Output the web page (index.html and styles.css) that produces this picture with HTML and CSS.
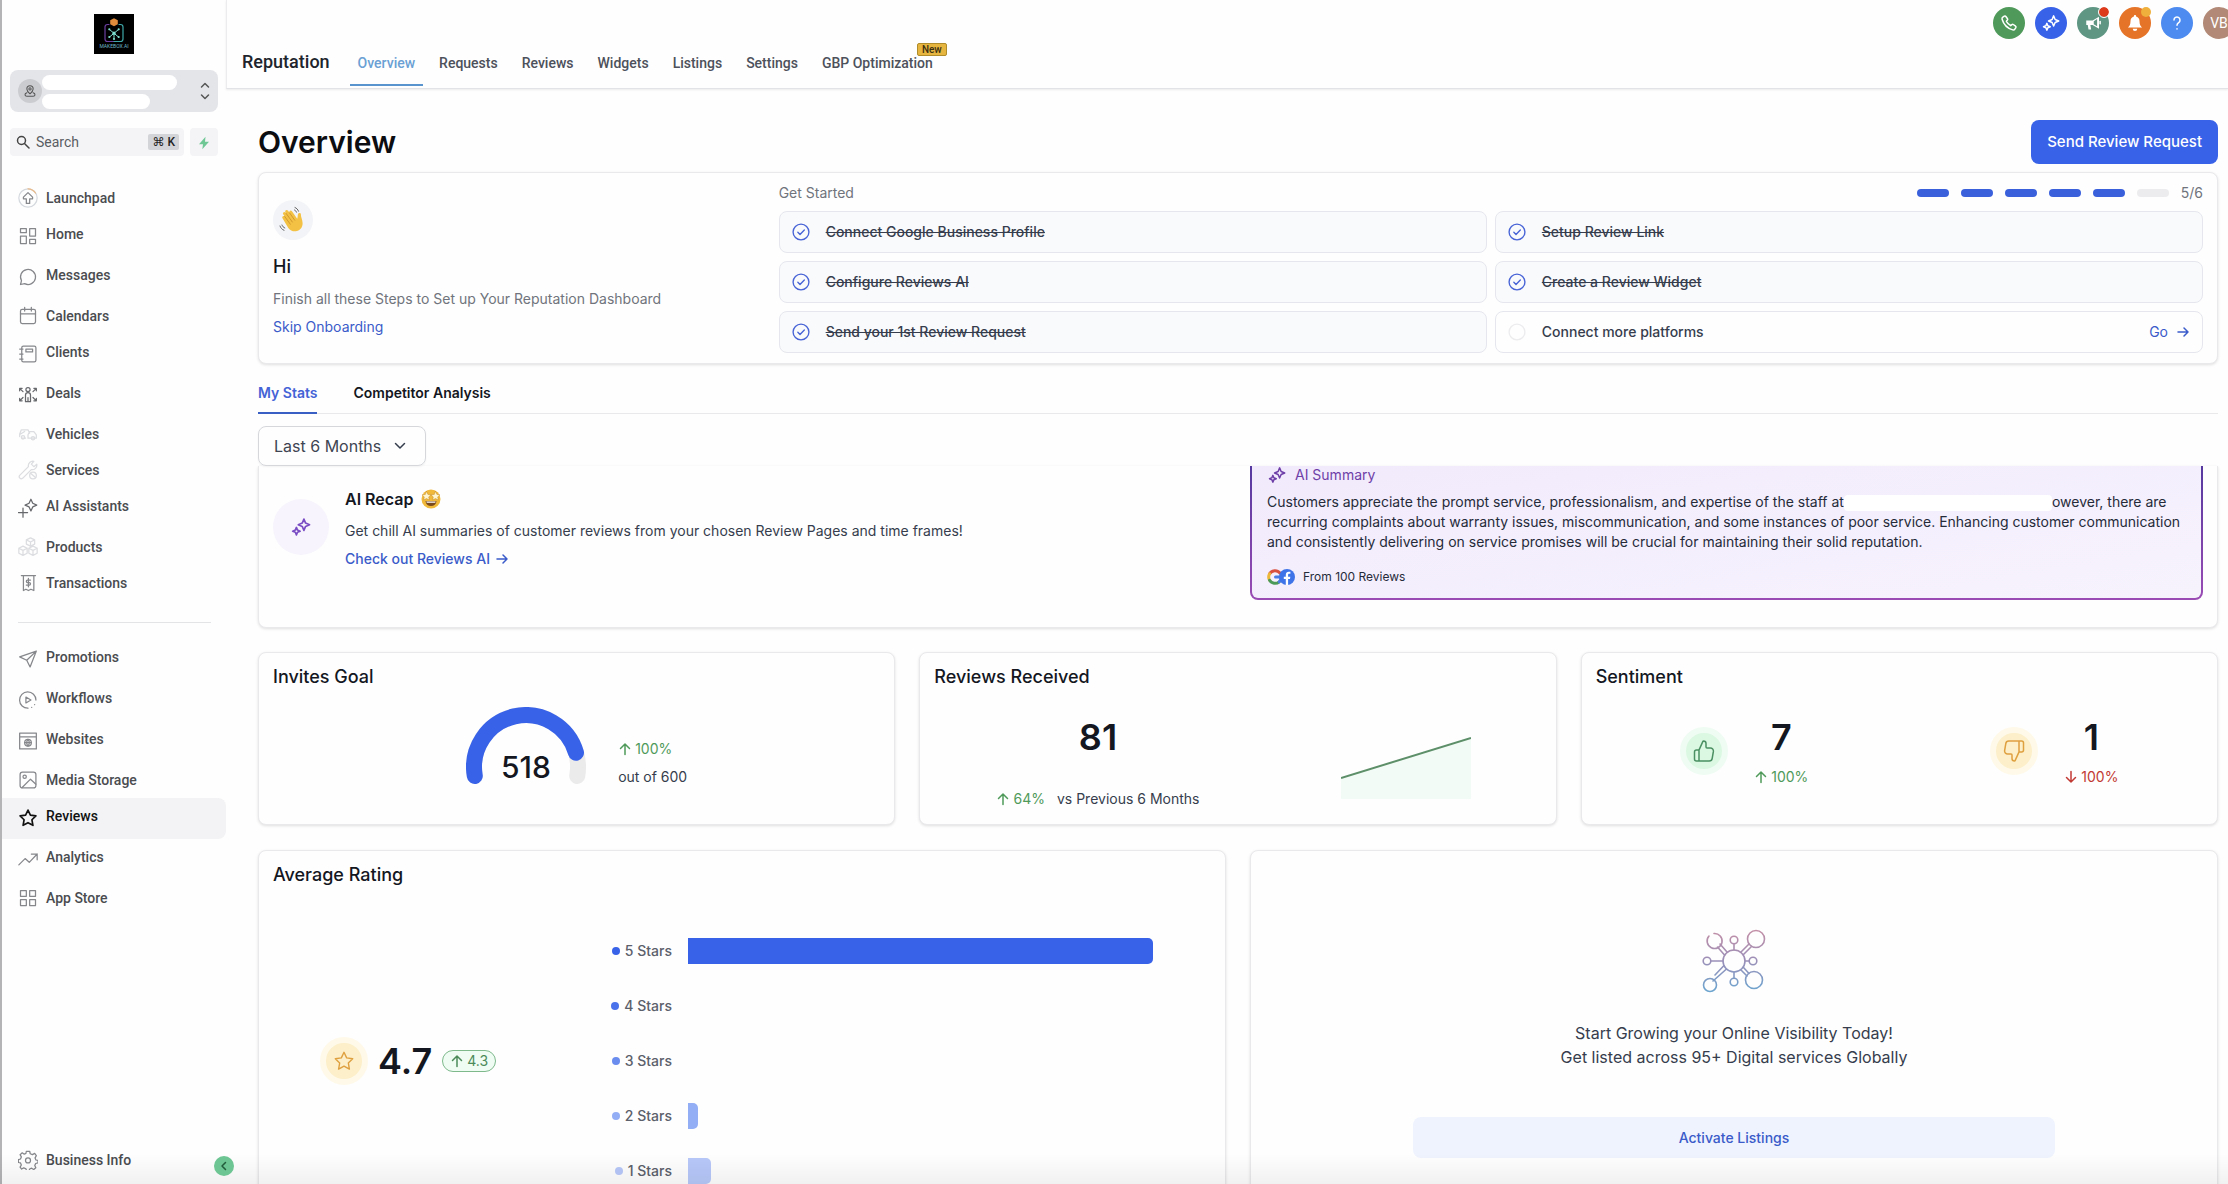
FILE: index.html
```html
<!DOCTYPE html>
<html lang="en">
<head>
  <meta charset="UTF-8" />
  <title>Reputation - Overview</title>
  <meta name="viewport" content="width=device-width, initial-scale=1.0"/>
  <link rel="stylesheet" href="styles.css">
</head>
<body>
  <!-- shared icons -->
  <svg class="sprite" xmlns="http://www.w3.org/2000/svg">
    <symbol id="i-up" viewBox="0 0 14 14"><path d="M7 12.500V2M2.500 6.500L7 2l4.500 4.500"/></symbol>
    <symbol id="i-down" viewBox="0 0 14 14"><path d="M7 1.500V12M2.500 7.500L7 12l4.500-4.500"/></symbol>
    <symbol id="i-right" viewBox="0 0 14 14"><path d="M2 7h10M8 3l4 4-4 4"/></symbol>
    <symbol id="i-check" viewBox="0 0 20 20"><circle cx="10" cy="10" r="8.800"/><path d="M6.500 10.300l2.400 2.400 4.800-5"/></symbol>
    <symbol id="i-sparkles" viewBox="0 0 24 24">
      <path d="M15.500 2.500l2 4.800 4.800 2-4.800 2-2 4.800-2-4.800-4.800-2 4.800-2z"/>
      <path d="M6.500 12.500l1.300 3.200L11 17l-3.200 1.300-1.300 3.200-1.300-3.200L2 17l3.200-1.300z"/>
    </symbol>
    <symbol id="i-star" viewBox="0 0 24 24"><path d="M12 2.500l2.900 6.100 6.600.9-4.800 4.600 1.200 6.700L12 17.600l-5.900 3.200 1.200-6.700L2.500 9.500l6.600-.9z"/></symbol>
    <symbol id="i-thumb" viewBox="0 0 24 24"><path d="M7 22V11M2.500 13v7a2 2 0 0 0 2 2h12.700a3 3 0 0 0 3-2.600l1.200-7A3 3 0 0 0 18.400 9H15a1 1 0 0 1-1-1V4.500A2.500 2.500 0 0 0 11.500 2a.7.7 0 0 0-.6.400L7.300 10.400a1 1 0 0 1-.9.600H4.500a2 2 0 0 0-2 2z"/></symbol>
  </svg>

  <!-- sidebar -->
  <aside class="sidebar">
    <svg class="logo" viewBox="0 0 40 40">
      <rect width="40" height="40" fill="#000"/>
      <path d="M15 10.500h-1.500a2.500 2.500 0 0 0-2.500 2.500v12a2.500 2.500 0 0 0 2.500 2.500H20" fill="none" stroke="#6b3fa0" stroke-width="1.200"/>
      <path d="M25 10.500h1.500A2.500 2.500 0 0 1 29 13v12a2.500 2.500 0 0 1-2.500 2.500H20" fill="none" stroke="#3fa7a8" stroke-width="1.200"/>
      <path d="M20 4.200l3.800 2v4L20 12.200l-3.800-2v-4z" fill="#e08a3c"/>
      <path d="M15.500 15.500l9 7.500M24.500 15.500l-9 7.500M20 19v5.500" stroke="#7fe0d0" stroke-width="1"/>
      <g fill="#7fe0d0"><circle cx="15.300" cy="15.300" r="1.100"/><circle cx="24.700" cy="15.300" r="1.100"/><circle cx="15.300" cy="23" r="1.100"/><circle cx="24.700" cy="23" r="1.100"/><circle cx="20" cy="25" r="1.100"/><circle cx="20" cy="19.200" r="1.600"/></g>
      <text x="20" y="33.500" text-anchor="middle" font-size="5" fill="#6fb7c9">MAKEBOX.AI</text>
    </svg>

    <button class="account" aria-label="Switch account">
      <span class="account-pin">
        <svg class="line" viewBox="0 0 20 20"><path d="M10 14c-3-2.600-4.500-4.700-4.500-7a4.500 4.500 0 0 1 9 0c0 2.300-1.500 4.400-4.500 7z"/><circle cx="10" cy="7" r="1.600"/><path d="M5.500 12.500c-4 1.500-3 5 0 5h9c3 0 4-3.500 0-5"/></svg>
      </span>
      <span class="account-lines"><i></i><i></i></span>
      <svg class="account-caret line" viewBox="0 0 10 18"><path d="M1.500 5L5 1.500 8.500 5M1.500 13L5 16.500 8.500 13"/></svg>
    </button>

    <div class="search-row">
      <label class="search">
        <svg class="line" viewBox="0 0 14 14"><circle cx="5.500" cy="5.500" r="4"/><path d="M8.500 8.500l4.500 4.500"/></svg>
        <input type="text" placeholder="Search" aria-label="Search">
        <kbd>⌘ K</kbd>
      </label>
      <button class="bolt" aria-label="Quick actions">
        <svg viewBox="0 0 12 14"><path d="M7.500 0.800L1 8.300h4L4.300 13.200 11 5.700H7z" fill="#6fc795"/></svg>
      </button>
    </div>

    <nav class="side-nav">
      <a href="#"><svg viewBox="0 0 24 24"><circle cx="12" cy="12" r="11" stroke="#d5d9de"/><path d="M12 1a11 11 0 0 1 9 5" stroke="#e9b98a"/><path d="M12 5.500L6.500 11v2H10v5.500h4V13h3.500v-2z"/></svg>Launchpad</a>
      <a href="#" class="tall"><svg viewBox="0 0 24 24"><path d="M3 3h7v5H3zM14 3h7v9h-7zM3 12h7v9H3zM14 16h7v5h-7z"/></svg>Home</a>
      <a href="#" class="tall"><svg viewBox="0 0 24 24"><path d="M3 21l1.200-4.600A9 9 0 1 1 8 20z"/></svg>Messages</a>
      <a href="#"><svg viewBox="0 0 24 24"><rect x="3" y="4" width="18" height="17" rx="2"/><path d="M3 9.500h18M8 1.500V6M16 1.500V6"/></svg>Calendars</a>
      <a href="#" class="tall"><svg viewBox="0 0 24 24"><rect x="4.500" y="2.500" width="17" height="19" rx="2"/><rect x="9.500" y="6" width="8" height="3.500"/><path d="M2 6h4M2 12h4M2 18h4"/></svg>Clients</a>
      <a href="#" class="tall dark"><svg viewBox="0 0 24 24"><circle cx="12" cy="5.500" r="2.500"/><path d="M9 20v-8a3 3 0 0 1 6 0v8zM12 15v5M2 4l4 4M2 7V4h3M22 4l-4 4M19 4h3v3M2 19l4-4M2 16v3h3M22 19l-4-4M22 16v3h-3"/></svg>Deals</a>
      <a href="#" class="faint"><svg viewBox="0 0 24 24"><path d="M2 15v-3l2-5h8l2 4M9 17H5M8 9l-5 3M12 13l2-4h5l3 4v4H12z"/><circle cx="6" cy="16" r="2"/><circle cx="18" cy="17" r="2"/></svg>Vehicles</a>
      <a href="#" class="faint"><svg viewBox="0 0 24 24"><path d="M2 18.500L12.500 8A5.500 5.500 0 0 1 19 1.500L16 5l3 3 3.500-3A5.500 5.500 0 0 1 16 11.500L5.500 22A2.500 2.500 0 0 1 2 18.500z"/><circle cx="18" cy="18.500" r="4"/><path d="M15 16l6 5"/></svg>Services</a>
      <a href="#" class="tall dark"><svg viewBox="0 0 24 24"><path d="M15.500 1.500l2.200 4.800L22.500 8.500l-4.800 2.200-2.200 4.800-2.200-4.800-4.800-2.200 4.800-2.200zM6 12v11M0.500 17.500h11"/></svg>AI Assistants</a>
      <a href="#" class="faint"><svg viewBox="0 0 24 24"><path d="M15 1l5 2.500v5L15 11l-5-2.500v-5zM10 3.500L15 6l5-2.500M15 6v5M6 11l5 2.500v6L6 22l-5-2.500v-6zM1 13.500L6 16l5-2.500M6 16v6M18 11l5 2.500v6L18 22l-5-2.500v-6zM13 13.500l5 2.500 5-2.500M18 16v6"/></svg>Products</a>
      <a href="#"><svg viewBox="0 0 24 24"><path d="M4 3h17M6.500 3v18l3-1.500 3 1.500 3-1.500 3.500 1.500V3M12.500 6.500v10M15 8.500h-3.500a1.500 1.500 0 0 0 0 3h2a1.500 1.500 0 0 1 0 3H10"/></svg>Transactions</a>
      <hr>
      <a href="#" class="tall"><svg viewBox="0 0 24 24"><path d="M22 2.500L2 9.500l8.500 4 4 8zM22 2.500L10.500 13.500"/></svg>Promotions</a>
      <a href="#" class="tall"><svg viewBox="0 0 24 24"><path d="M21.500 12A9.800 9.800 0 1 0 12 21.800M16.500 20.800l-.1.100M20 17.500l-.1.100M9.500 8.500l6 3.500-6 3.500z"/></svg>Workflows</a>
      <a href="#" class="tall"><svg viewBox="0 0 24 24"><path d="M2 2.500h20v19H2zM2 7h20"/><circle cx="12" cy="14" r="4"/><path d="M8 14h8M12 10c-2 2.500-2 5.500 0 8 2-2.500 2-5.500 0-8z"/></svg>Websites</a>
      <a href="#"><svg viewBox="0 0 24 24"><rect x="2.500" y="2.500" width="19" height="19" rx="3"/><circle cx="8" cy="8" r="2"/><path d="M5 21l10-10 6.500 6"/></svg>Media Storage</a>
      <a href="#" class="tall active"><svg><use href="#i-star"/></svg>Reviews</a>
      <a href="#" class="tall"><svg viewBox="0 0 24 24"><path d="M1 19l7.500-7.500 5 4.500L23 6M16 6h7v7"/></svg>Analytics</a>
      <a href="#"><svg viewBox="0 0 24 24"><path d="M3 3h7v7H3zM14 3h7v7h-7zM3 14h7v7H3zM14 14h7v7h-7z"/></svg>App Store</a>
    </nav>

    <div class="side-foot">
      <a href="#"><svg viewBox="0 0 24 24"><path d="M10 1.500h4l.7 3 2.600 1.100 2.700-1.500 2 2.700-1.500 2.700 1 2.500 2.500.500v3l-2.800.7-1.100 2.400 1.300 2.600-2.500 2.200-2.600-1.600-2.300 1-.7 2.200h-3l-.8-2.500-2.600-1.100-2.500 1.500L2.500 20.500 4 18l-1-2.500L.5 15v-3.500L3 10.800l1-2.500-1.500-2.700 2.600-2.200L7.500 5l2-.9z"/><circle cx="12" cy="12.500" r="3"/></svg>Business Info</a>
      <button class="collapse" aria-label="Collapse sidebar"><svg class="line" viewBox="0 0 10 10"><path d="M6.500 1.500L3 5l3.500 3.500"/></svg></button>
    </div>
  </aside>

  <div class="content">
    <!-- top bar -->
    <header class="header">
      <h2>Reputation</h2>
      <nav class="top-nav">
        <a href="#" class="active">Overview</a>
        <a href="#">Requests</a>
        <a href="#">Reviews</a>
        <a href="#">Widgets</a>
        <a href="#">Listings</a>
        <a href="#">Settings</a>
        <a href="#">GBP Optimization<span class="new">New</span></a>
      </nav>
      <div class="top-icons">
        <button class="round green" aria-label="Call"><svg viewBox="0 0 24 24"><path d="M8.500 9.800a15 15 0 0 0 5.700 5.700l1.700-1.400a1.500 1.500 0 0 1 1.800-.100l3 2.200a1.500 1.500 0 0 1 .4 2l-1.300 2a2.500 2.500 0 0 1-2.800 1C9.500 19 5 14.500 2.800 7a2.500 2.500 0 0 1 1-2.800l2-1.300a1.500 1.500 0 0 1 2 .4l2.200 3a1.500 1.500 0 0 1-.1 1.800z"/></svg></button>
        <button class="round blue" aria-label="AI"><svg><use href="#i-sparkles"/></svg></button>
        <button class="round teal" aria-label="Announcements"><svg viewBox="0 0 24 24"><path d="M3 8.500h8.500L20 3.500v16l-8.500-5H8.500l1 6H6l-1-6H3z" fill="#fff" stroke="none"/><path d="M13 9.500l4.500-2.700v9.400L13 13.500z" fill="#5f9683" stroke="none"/><path d="M21.500 10v3"/></svg><i class="dot red"></i></button>
        <button class="round orange" aria-label="Notifications"><svg viewBox="0 0 24 24"><path d="M12 1.500a1.500 1.500 0 0 1 1.500 1.700C16.500 4 18 6.500 18 9.500c0 4.500 1.500 6.500 3.500 8.500h-19C4.500 16 6 14 6 9.500c0-3 1.500-5.500 4.500-6.300A1.500 1.500 0 0 1 12 1.500zM9 19.500h6a3 3 0 0 1-6 0z" fill="#fff" stroke="none"/></svg><i class="dot amber"></i></button>
        <button class="round sky" aria-label="Help"><svg viewBox="0 0 24 24"><path d="M8 8a4 4 0 1 1 6.200 3.400C12.700 12.400 12 13 12 15M12 19.500v.5"/></svg></button>
        <button class="round avatar">VB</button>
      </div>
    </header>

    <main class="main">
      <div class="page-head">
        <h1>Overview</h1>
        <button class="primary">Send Review Request</button>
      </div>

      <!-- onboarding -->
      <section class="card onboarding">
        <div class="welcome">
          <div class="wave">
            <svg viewBox="0 0 30 30">
              <path d="M4.500 13.200c-1-1.600 1-3 2.200-1.700l-1.500-2.300c-1-1.600 1.200-3.100 2.300-1.600l.7.900-.8-1.400C6.400 5.300 8.700 4 9.900 5.600l1.600 2.200C10.700 6 12.900 4.700 14 6.300l5.200 7.500c.7-1.500.3-3.100.8-4.700.500-1.700 2.900-1.400 2.900.3-.1 2.700 1.600 5.200 1.700 8.600.1 4.800-3 8-7 8.300-3 .2-5.400-1-7.300-3.400z" fill="#f3c244"/>
              <path d="M6.700 11.500l5.600 7.700M8.200 8.500l6.200 8.600M11.500 7.800l5.200 7.400" fill="none" stroke="#c98d2a" stroke-width=".8"/>
              <path d="M2 21c.7 2 2 3.500 4 4.300M4 20c.5 1.400 1.400 2.400 2.800 3M17 2.500c1.700.7 2.900 2 3.500 3.700M16.500 5c1 .5 1.700 1.200 2 2.200" fill="none" stroke="#555" stroke-width=".9"/>
            </svg>
          </div>
          <h3>Hi</h3>
          <p>Finish all these Steps to Set up Your Reputation Dashboard</p>
          <a href="#">Skip Onboarding</a>
        </div>
        <div class="steps">
          <div class="steps-head">
            <span>Get Started</span>
            <div class="progress"><i></i><i></i><i></i><i></i><i></i><i class="off"></i><span>5/6</span></div>
          </div>
          <ul class="step-list">
            <li><svg><use href="#i-check"/></svg><s>Connect Google Business Profile</s></li>
            <li><svg><use href="#i-check"/></svg><s>Setup Review Link</s></li>
            <li><svg><use href="#i-check"/></svg><s>Configure Reviews AI</s></li>
            <li><svg><use href="#i-check"/></svg><s>Create a Review Widget</s></li>
            <li><svg><use href="#i-check"/></svg><s>Send your 1st Review Request</s></li>
            <li class="todo"><svg viewBox="0 0 20 20"><circle cx="10" cy="10" r="8.800"/></svg>Connect more platforms<a href="#">Go <svg class="arrow"><use href="#i-right"/></svg></a></li>
          </ul>
        </div>
      </section>

      <div class="tabs">
        <a href="#" class="active">My Stats</a>
        <a href="#">Competitor Analysis</a>
      </div>

      <div class="range">
        <select aria-label="Time range">
          <option>Last 6 Months</option>
        </select>
        <svg class="line" viewBox="0 0 12 8"><path d="M1.500 1.500L6 6l4.500-4.500"/></svg>
      </div>

      <!-- AI recap -->
      <section class="card recap">
        <div class="recap-left">
          <span class="recap-icon"><svg><use href="#i-sparkles"/></svg></span>
          <div>
            <h4>AI Recap
              <svg viewBox="0 0 20 20">
                <circle cx="10" cy="10" r="9.500" fill="#f0b93a"/>
                <path d="M4.500 12h11c-.3 3.300-2.500 5-5.500 5s-5.200-1.700-5.500-5z" fill="#7a4a1c"/><path d="M5.300 12.400h9.400l-.5 1.400H5.800z" fill="#fff"/>
                <path d="M5.500 2.500l1.400 2.900 3.100.4-2.300 2.100.6 3.100-2.800-1.500L2.700 11l.6-3.100L1 5.800l3.100-.4zM14.500 2.500l1.400 2.900 3.100.4-2.300 2.100.6 3.100-2.800-1.500-2.800 1.500.6-3.100L10 5.800l3.100-.4z" fill="#fff6cf" stroke="#b57a22" stroke-width=".4"/>
              </svg>
            </h4>
            <p>Get chill AI summaries of customer reviews from your chosen Review Pages and time frames!</p>
            <a href="#">Check out Reviews AI <svg class="arrow"><use href="#i-right"/></svg></a>
          </div>
        </div>
        <div class="summary">
          <div class="summary-title"><svg><use href="#i-sparkles"/></svg>AI Summary</div>
          <p>Customers appreciate the prompt service, professionalism, and expertise of the staff at<span class="blank"></span>owever, there are recurring complaints about warranty issues, miscommunication, and some instances of poor service. Enhancing customer communication and consistently delivering on service promises will be crucial for maintaining their solid reputation.</p>
          <div class="sources">
            <svg viewBox="0 0 28 16">
              <g fill="none" stroke-width="3">
                <path d="M13 4.200A6.300 6.300 0 0 0 2.600 4.800" stroke="#d9503f"/>
                <path d="M2.600 4.800a6.300 6.300 0 0 0 0 6.400" stroke="#edb83a"/>
                <path d="M2.600 11.200a6.300 6.300 0 0 0 9.600 1.600" stroke="#4c9a57"/>
                <path d="M12.200 12.800A6 6 0 0 0 14.300 8H8.500" stroke="#4b7be5"/>
              </g>
              <circle cx="20" cy="8" r="8" fill="#3f74e8"/>
              <path d="M18.800 16V10h-2V7.700h2V6c0-2.200 1.200-3.300 3-3.300.7 0 1.300.1 1.600.1v2h-1.100c-.9 0-1.200.5-1.200 1.200v1.700h2.200L23 10h-1.900v6z" fill="#fff"/>
            </svg>
            From 100 Reviews
          </div>
        </div>
      </section>

      <!-- stat cards -->
      <div class="stats">
        <section class="card">
          <h3>Invites Goal</h3>
          <div class="stat-body goal">
            <svg class="gauge" viewBox="0 0 120 80">
              <path d="M8.800 69A52 52 0 1 1 111.200 69" stroke="#ebebeb"/>
              <path d="M8.800 69A52 52 0 0 1 110 45.700" stroke="#3862e8"/>
              <text x="60" y="71" text-anchor="middle">518</text>
            </svg>
            <div class="stack">
              <span class="up"><svg class="arrow"><use href="#i-up"/></svg>100%</span>
              <span>out of 600</span>
            </div>
          </div>
        </section>
        <section class="card">
          <h3>Reviews Received</h3>
          <div class="stat-body received">
            <div class="stack">
              <strong>81</strong>
              <div class="versus"><span class="up"><svg class="arrow"><use href="#i-up"/></svg>64%</span><span>vs Previous 6 Months</span></div>
            </div>
            <svg class="trend" viewBox="0 0 130 62"><path d="M0 41L130 1v61H0z" fill="#f2fbf5"/><path d="M0 41L130 1" stroke="#5d8f69" stroke-width="2"/></svg>
          </div>
        </section>
        <section class="card">
          <h3>Sentiment</h3>
          <div class="stat-body sentiment">
            <div class="mood">
              <span class="halo good"><svg><use href="#i-thumb"/></svg></span>
              <div class="stack"><strong>7</strong><span class="up"><svg class="arrow"><use href="#i-up"/></svg>100%</span></div>
            </div>
            <div class="mood">
              <span class="halo warn"><svg class="flip"><use href="#i-thumb"/></svg></span>
              <div class="stack"><strong>1</strong><span class="down"><svg class="arrow"><use href="#i-down"/></svg>100%</span></div>
            </div>
          </div>
        </section>
      </div>

      <div class="lower">
        <section class="card rating">
          <h3>Average Rating</h3>
          <div class="rating-body">
            <div class="score">
              <span class="halo warn"><svg><use href="#i-star"/></svg></span>
              <strong>4.7</strong>
              <span class="pill"><svg class="arrow"><use href="#i-up"/></svg>4.3</span>
            </div>
            <ul class="bars">
              <li class="s5"><span>5 Stars</span><div><i style="width:89%"></i></div></li>
              <li class="s4"><span>4 Stars</span><div><i style="width:0%"></i></div></li>
              <li class="s3"><span>3 Stars</span><div><i style="width:0%"></i></div></li>
              <li class="s2"><span>2 Stars</span><div><i style="width:2%"></i></div></li>
              <li class="s1"><span>1 Stars</span><div><i style="width:4.4%"></i></div></li>
            </ul>
          </div>
        </section>
        <section class="card listings">
          <svg viewBox="0 0 64 64">
            <defs><linearGradient id="net" gradientUnits="userSpaceOnUse" x1="0" y1="0" x2="0" y2="64"><stop offset="0" stop-color="#c48fa6"/><stop offset=".5" stop-color="#9a8fb8"/><stop offset="1" stop-color="#6aa6d0"/></linearGradient></defs>
            <g fill="none" stroke="url(#net)" stroke-width="1.600">
              <circle cx="32" cy="32" r="11"/><circle cx="54" cy="10" r="8.500"/><circle cx="52" cy="51" r="8.500"/><circle cx="8" cy="56" r="6.500"/>
              <path d="M7 7a7.500 7.500 0 1 0 5-2.500"/>
              <circle cx="32" cy="11" r="3.800"/><circle cx="32" cy="53" r="3.800"/><circle cx="5" cy="32" r="3.800"/><circle cx="51" cy="32" r="3.800"/>
              <path d="M32 15v6M32 43v6M9 32h12M43 32h4M39 23l8-8M41.500 25.500l8-8M25 23l-7-8M22.500 26l-7-8M39 41l6 6M41.500 38.500l5.500 6M24.500 40L11 52M22 36.500L13 46"/>
            </g>
          </svg>
          <p>Start Growing your Online Visibility Today!<br>Get listed across 95+ Digital services Globally</p>
          <button class="activate">Activate Listings</button>
        </section>
      </div>
    </main>
  </div>
  <div class="bottom-fade"></div>
</body>
</html>
```

FILE: styles.css
```css
* {
  box-sizing: border-box;
}
body {
  margin: 0;
  height: 100vh;
  display: flex;
  overflow: hidden;
  background: #fefefe;
  font-family: Inter, "Liberation Sans", sans-serif;
  font-size: 14px;
  line-height: 20px;
  color: #363d4d;
}
h1, h2, h3, h4, p, ul {
  margin: 0;
  padding: 0;
  font-weight: 500;
}
p {
  font-weight: 400;
}
ul {
  list-style: none;
}
a {
  text-decoration: none;
  color: #3a5bc9;
}
button, input, select {
  font: inherit;
  border: none;
}
button {
  padding: 0;
  cursor: pointer;
}
svg {
  fill: none;
  stroke: currentColor;
  stroke-width: 1.5;
  stroke-linecap: round;
  stroke-linejoin: round;
  flex: none;
}
.sprite {
  position: absolute;
  width: 0;
  height: 0;
}
.arrow {
  width: 14px;
  height: 14px;
}

/* sidebar */
.sidebar {
  flex: none;
  width: 226px;
  display: flex;
  flex-direction: column;
  padding: 14px 0 6px;
  border-left: 2px solid #b4b4b6;
  font-family: Roboto, "Liberation Sans", sans-serif;
}
.logo {
  width: 40px;
  height: 40px;
  margin: 0 auto 16px;
  stroke: none;
}
.account {
  display: flex;
  align-items: center;
  height: 42px;
  margin: 0 8px 16px;
  padding: 0 8px;
  border-radius: 8px;
  background: #e4e5e9;
  color: #555;
}
.account-pin {
  display: flex;
  align-items: center;
  justify-content: center;
  width: 24px;
  height: 24px;
  border-radius: 50%;
  background: #cbccd0;
}
.account-pin svg {
  width: 14px;
  height: 14px;
}
.account-lines {
  flex: 1;
}
.account-lines i {
  display: block;
  width: 135px;
  height: 15px;
  margin: 2px 0 4px;
  border-radius: 8px;
  background: #fff;
}
.account-lines i + i {
  width: 108px;
  margin-bottom: 0;
}
.account-caret {
  width: 10px;
  height: 18px;
}
.search-row {
  display: flex;
  gap: 6px;
  margin: 0 8px 24px;
}
.search {
  flex: 1;
  min-width: 0;
  display: flex;
  align-items: center;
  gap: 6px;
  height: 28px;
  padding: 0 5px 0 6px;
  border-radius: 4px;
  background: #f4f4f6;
  color: #444;
}
.search svg {
  width: 14px;
  height: 14px;
}
.search input {
  flex: 1;
  min-width: 0;
  padding: 0;
  background: none;
  outline: none;
}
.search input::placeholder {
  color: #5a5d63;
}
kbd {
  padding: 0 4px;
  border-radius: 2px;
  background: #d3d4d8;
  color: #222;
  font: 500 12px/16px Roboto, "DejaVu Sans", sans-serif;
  white-space: nowrap;
}
.bolt {
  flex: none;
  width: 28px;
  border-radius: 4px;
  background: #f4f4f6;
}
.bolt svg {
  width: 12px;
  height: 14px;
  stroke: none;
  vertical-align: middle;
}
.side-nav a,
.side-foot a {
  display: flex;
  align-items: center;
  gap: 8px;
  height: 36px;
  padding-left: 16px;
  color: #4a4c50;
  font-weight: 500;
}
.side-nav svg,
.side-foot svg {
  width: 20px;
  height: 20px;
  color: #85878b;
}
.side-nav .tall {
  height: 41px;
  padding-bottom: 5px;
}
.side-nav .tall svg {
  margin-top: 4px;
}
.side-nav .faint svg {
  color: #dcdde0;
}
.side-nav .dark svg {
  color: #66686c;
}
.side-nav .active {
  border-radius: 0 8px 8px 0;
  background: #f3f3f5;
  color: #111;
}
.side-nav .active svg {
  color: #111;
  stroke-width: 2;
}
.side-nav hr {
  margin: 21px 15px 16px 16px;
  border: none;
  border-top: 1px solid #e3e4e6;
}
.side-foot {
  display: flex;
  align-items: center;
  margin-top: auto;
}
.side-foot a {
  flex: 1;
}
.side-foot .collapse {
  display: flex;
  align-items: center;
  justify-content: center;
  z-index: 2;
  width: 20px;
  height: 20px;
  margin-right: -8px;
  margin-top: 12px;
  border-radius: 50%;
  background: #6cc592;
}
.side-foot .collapse svg {
  width: 10px;
  height: 10px;
  color: #225c3c;
}

/* top bar */
.content {
  flex: 1;
  min-width: 0;
  display: flex;
  flex-direction: column;
}
.header {
  flex: 0 0 89px;
  display: flex;
  align-items: flex-end;
  padding-left: 15px;
  border-left: 1px solid #ececee;
  border-bottom: 1px solid #e2e3e6;
  box-shadow: 0 1px 2px rgba(0, 0, 0, .08);
  font-family: Roboto, "Liberation Sans", sans-serif;
}
.header h2 {
  margin: 0 20px 14px 0;
  font-size: 18px;
  line-height: 24px;
  color: #20242c;
}
.top-nav {
  flex: 1;
  display: flex;
  gap: 8px;
}
.top-nav a {
  position: relative;
  padding: 0 8px 15px;
  color: #4d515b;
  font-weight: 500;
}
.top-nav .active {
  border-bottom: 2px solid #5a94cf;
  margin-bottom: 2px;
  padding-bottom: 11px;
  color: #6aa0d4;
}
.new {
  position: absolute;
  right: -6px;
  top: -10px;
  padding: 0 4px;
  border: 1px solid #b08c2a;
  border-radius: 2px;
  background: #e5b53f;
  color: #3b2f10;
  font-size: 10px;
  line-height: 11px;
}
.top-icons {
  align-self: flex-start;
  display: flex;
  gap: 10px;
  margin: 7px -7px 0 0;
}
.round {
  position: relative;
  display: flex;
  align-items: center;
  justify-content: center;
  width: 32px;
  height: 32px;
  border-radius: 50%;
  color: #fff;
}
.round svg {
  width: 18px;
  height: 18px;
  stroke-width: 2;
}
.green { background: #4f9a5a; }
.blue { background: #3862e8; }
.teal { background: #5f9683; }
.orange { background: #e67428; }
.sky { background: #4d8bf0; }
.avatar { background: #b18976; }
.dot {
  position: absolute;
  top: 0;
  right: 0;
  width: 10px;
  height: 10px;
  border-radius: 50%;
}
.dot.red { background: #dd3a1c; outline: 1px solid #fff; }
.dot.amber { background: #efb03c; }

/* page */
.main {
  flex: 1;
  min-height: 0;
  overflow: hidden;
  padding: 31px 10px 0 32px;
}
.page-head {
  display: flex;
  align-items: center;
  justify-content: space-between;
  margin-bottom: 8px;
}
h1 {
  font-size: 30px;
  line-height: 36px;
  font-weight: 600;
  color: #0c0d10;
}
.primary {
  height: 44px;
  padding: 0 16px;
  border-radius: 8px;
  background: #3862e8;
  color: #fff;
  font-size: 15px;
  font-weight: 500;
}
.card {
  padding: 10px 14px;
  border: 1px solid #e9e9ec;
  border-radius: 8px;
  background: #fefefe;
  box-shadow: 0 1px 3px rgba(0, 0, 0, .12);
}
.card h3 {
  font-size: 18px;
  line-height: 28px;
  color: #14171f;
}

/* onboarding */
.onboarding {
  display: grid;
  grid-template-columns: 11fr 32fr;
  gap: 16px;
}
.welcome {
  padding-top: 17px;
  color: #70747c;
}
.wave {
  display: flex;
  align-items: center;
  justify-content: center;
  width: 40px;
  height: 40px;
  margin-bottom: 13px;
  border-radius: 50%;
  background: #f3f4f7;
}
.wave svg {
  width: 30px;
  height: 30px;
  stroke: none;
}
.welcome p {
  margin: 8px 0;
}
.steps-head {
  display: flex;
  justify-content: space-between;
  margin-bottom: 8px;
  color: #70747c;
}
.progress {
  display: flex;
  align-items: center;
  gap: 12px;
}
.progress i {
  width: 32px;
  height: 8px;
  border-radius: 4px;
  background: #3a60dc;
}
.progress .off {
  background: #ececee;
}
.step-list {
  display: grid;
  grid-template-columns: 1fr 1fr;
  gap: 8px;
}
.step-list li {
  display: flex;
  align-items: center;
  gap: 16px;
  height: 42px;
  padding: 0 12px;
  border: 1px solid #e6e7ee;
  border-radius: 8px;
  background: #f9fafc;
  font-weight: 500;
}
.step-list li > svg {
  width: 18px;
  height: 18px;
  color: #4763d6;
}
.step-list .todo {
  background: none;
}
.step-list .todo > svg {
  color: #ececef;
}
.todo a {
  display: flex;
  align-items: center;
  gap: 8px;
  margin-left: auto;
  font-weight: 400;
}

/* tabs + range */
.tabs {
  display: flex;
  gap: 36px;
  margin: 16px 0 12px;
  box-shadow: inset 0 -1px #e9e9ec;
}
.tabs a {
  padding-bottom: 8px;
  color: #14171f;
  font-weight: 600;
  line-height: 26px;
}
.tabs .active {
  padding-bottom: 6px;
  border-bottom: 2px solid #3a5fc4;
  color: #4463d6;
}
.range {
  display: flex;
  align-items: center;
}
.range select {
  width: 168px;
  height: 40px;
  padding: 0 15px;
  border: 1px solid #d5d7db;
  border-radius: 8px;
  appearance: none;
  background: none;
  color: #3f4552;
  font-size: 16px;
  box-shadow: 0 1px 2px rgba(0, 0, 0, .05);
}
.range svg {
  width: 12px;
  height: 8px;
  margin-left: -32px;
  pointer-events: none;
}

/* AI recap */
.recap {
  display: grid;
  grid-template-columns: 1fr 1fr;
  gap: 24px;
  padding: 0 14px 27px;
  border-top: none;
  border-radius: 0 0 8px 8px;
}
.recap-left {
  display: flex;
  gap: 16px;
  padding-top: 21px;
}
.recap-icon {
  flex: none;
  display: flex;
  align-items: center;
  justify-content: center;
  width: 56px;
  height: 56px;
  margin-top: 12px;
  border-radius: 50%;
  background: #f7f4fd;
  color: #7a4cc4;
}
.recap-icon svg {
  width: 20px;
  height: 20px;
  stroke-width: 2;
}
.recap h4 {
  display: flex;
  align-items: center;
  gap: 8px;
  font-size: 16px;
  line-height: 24px;
  font-weight: 600;
  color: #14171f;
}
.recap h4 svg {
  width: 20px;
  height: 20px;
  stroke: none;
}
.recap-left p {
  margin: 10px 0 8px;
}
.recap-left a {
  display: flex;
  align-items: center;
  gap: 5px;
  font-weight: 500;
}
.summary {
  padding: 0 15px 11px;
  border: 2px solid transparent;
  border-top: none;
  border-radius: 0 0 8px 8px;
  background: linear-gradient(170deg, #f1eafc, #f7f3fd) padding-box, linear-gradient(#55399f, #9a4cb4) border-box;
  color: #262b3a;
}
.summary-title {
  display: flex;
  align-items: center;
  gap: 8px;
  margin-bottom: 8px;
  line-height: 18px;
  color: #6f3fa8;
}
.summary-title svg {
  width: 20px;
  height: 18px;
  stroke-width: 2;
}
.blank {
  display: inline-block;
  width: 208px;
  height: 16px;
  border-radius: 4px;
  background: #fff;
  vertical-align: middle;
}
.sources {
  display: flex;
  align-items: center;
  gap: 8px;
  margin-top: 15px;
  font-size: 12px;
}
.sources svg {
  width: 28px;
  height: 16px;
  stroke: none;
}

/* stat cards */
.stats {
  display: grid;
  grid-template-columns: repeat(3, 1fr);
  gap: 24px;
  margin: 24px 0 25px;
}
.stats .card {
  height: 173px;
}
.stat-body {
  display: flex;
  justify-content: center;
  padding-top: 24px;
}
.stat-body.goal {
  align-items: flex-end;
  gap: 32px;
  padding-top: 16px;
}
.stat-body.received {
  align-items: flex-end;
  gap: 142px;
  padding-right: 8px;
}
.received .stack {
  gap: 30px;
}
.stat-body.sentiment {
  gap: 182px;
}
.stack {
  display: flex;
  flex-direction: column;
  gap: 8px;
}
.received .stack,
.mood .stack {
  align-items: center;
}
strong {
  font-size: 36px;
  line-height: 44px;
  font-weight: 600;
  color: #14171f;
}
.gauge {
  width: 120px;
  height: 80px;
  stroke-width: 16;
}
.gauge text {
  fill: #14171f;
  stroke: none;
  font-size: 30px;
  font-weight: 500;
}
.up, .down {
  display: flex;
  align-items: center;
  gap: 3px;
  color: #4f9a5a;
}
.down {
  color: #c23a34;
}
.versus {
  display: flex;
  gap: 12px;
}
.trend {
  width: 130px;
  height: 62px;
  margin-bottom: 10px;
  stroke: none;
  stroke-linecap: butt;
}
.mood {
  display: flex;
  align-items: center;
  gap: 26px;
}
.halo {
  display: flex;
  align-items: center;
  justify-content: center;
  width: 48px;
  height: 48px;
  border: 6px solid #effcf3;
  border-radius: 50%;
}
.halo svg {
  width: 24px;
  height: 24px;
}
.halo.good {
  background: #dbf8e2;
  color: #4b9062;
}
.halo.warn {
  border-color: #fef9e9;
  background: #fcefc9;
  color: #dfa040;
}
.flip {
  transform: rotate(180deg);
}

/* rating + listings */
.lower {
  display: grid;
  grid-template-columns: 1fr 1fr;
  gap: 24px;
}
.lower .card {
  min-height: 400px;
}
.rating-body {
  display: flex;
  align-items: center;
  margin-top: 34px;
}
.score {
  flex: 0 0 290px;
  display: flex;
  align-items: center;
  margin-left: 47px;
}
.score .halo svg {
  width: 22px;
  height: 22px;
}
.score strong {
  margin: 0 10px;
}
.pill {
  display: flex;
  align-items: center;
  gap: 3px;
  padding: 0 7px;
  border: 1px solid #7db98b;
  border-radius: 11px;
  background: #effcf3;
  color: #4b8a59;
}
.bars {
  flex: 1;
}
.bars li {
  display: flex;
  align-items: center;
  gap: 16px;
  height: 55px;
  color: #5b606b;
}
.bars span {
  display: flex;
  align-items: center;
  justify-content: flex-end;
  gap: 5px;
  width: 62px;
  white-space: nowrap;
}
.bars span::before {
  content: "";
  width: 8px;
  height: 8px;
  border-radius: 50%;
  background: var(--bar);
}
.bars div {
  flex: 1;
}
.bars i {
  display: block;
  height: 26px;
  border-radius: 0 5px 5px 0;
  background: var(--bar);
}
.s5 { --bar: #3862e8; }
.s4 { --bar: #4a72ea; }
.s3 { --bar: #6a8cef; }
.s2 { --bar: #93aef5; }
.s1 { --bar: #b7c8f9; }
.listings {
  display: flex;
  flex-direction: column;
  align-items: center;
  padding-top: 78px;
  text-align: center;
}
.listings svg {
  width: 64px;
  height: 64px;
}
.listings p {
  margin: 28px 0 48px;
  font-size: 16px;
  line-height: 24px;
}
.listings .activate {
  width: 68.5%;
  height: 41px;
  border-radius: 8px;
  background: #eff3fe;
  color: #3a5bc9;
  font-weight: 500;
}
.bottom-fade {
  position: fixed;
  left: 0;
  right: 0;
  bottom: 0;
  height: 30px;
  background: linear-gradient(transparent, rgba(0, 0, 0, .05));
  pointer-events: none;
}
```
